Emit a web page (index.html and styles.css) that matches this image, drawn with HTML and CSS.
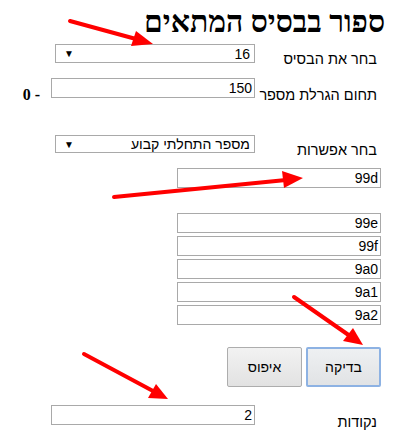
FILE: index.html
```html
<!DOCTYPE html>
<html lang="he" dir="rtl">
<head>
<meta charset="utf-8">
<link rel="stylesheet" href="styles.css">
</head>
<body>
<div class="page">
  <h1 class="title">ספור בבסיס המתאים</h1>

  <div class="row row-base">
    <div class="label">בחר את הבסיס</div>
    <div class="select sel-base"><span>16</span><span class="caret">▼</span></div>
  </div>

  <div class="row row-range">
    <div class="label">תחום הגרלת מספר</div>
    <div class="field f-range">150</div>
    <div class="zero" dir="ltr">0 -</div>
  </div>

  <div class="row row-opt">
    <div class="label">בחר אפשרות</div>
    <div class="select sel-opt"><span>מספר התחלתי קבוע</span><span class="caret">▼</span></div>
  </div>

  <div class="row row-start">
    <div class="field f-wide">99d</div>
  </div>

  <div class="list">
    <div class="field f-wide">99e</div>
    <div class="field f-wide">99f</div>
    <div class="field f-wide">9a0</div>
    <div class="field f-wide">9a1</div>
    <div class="field f-wide">9a2</div>
  </div>

  <div class="buttons">
    <div class="btn btn-focus">בדיקה</div>
    <div class="btn">איפוס</div>
  </div>

  <div class="row row-points">
    <div class="label">נקודות</div>
    <div class="field f-range">2</div>
  </div>

  <svg class="arrows" width="405" height="445" viewBox="0 0 405 445">
    <g stroke="#f00" stroke-width="4" stroke-linecap="round" fill="#f00">
      <line x1="70" y1="21" x2="136" y2="39"/>
      <polygon stroke="none" points="153,44 131,46 136,31"/>
      <line x1="114" y1="197" x2="286" y2="180"/>
      <polygon stroke="none" points="303,178 284,188 282,171"/>
      <line x1="294" y1="297" x2="350" y2="336"/>
      <polygon stroke="none" points="363,345 343,341 353,328"/>
      <line x1="84" y1="354" x2="153" y2="391"/>
      <polygon stroke="none" points="168,399 148,398 156,384"/>
    </g>
  </svg>
</div>
</body>
</html>
```
FILE: styles.css
```css
html, body {
  margin: 0;
  padding: 0;
  background: #fff;
}
.page {
  position: relative;
  width: 405px;
  height: 445px;
  direction: rtl;
  font-family: "Liberation Sans", Arial, sans-serif;
  font-size: 14px;
  color: #000;
  overflow: hidden;
}
.title {
  margin: 0;
  height: 44px;
  padding-right: 20px;
  box-sizing: border-box;
  font-family: "Liberation Serif", "Times New Roman", serif;
  font-weight: bold;
  font-size: 30px;
  line-height: 44px;
}
.row {
  display: flex;
  align-items: flex-start;
  padding-right: 28px;
  box-sizing: border-box;
}
.label {
  width: 122px;
  flex: none;
  line-height: 18px;
  font-size: 14.5px;
}
.row-base { height: 34px; }
.row-base .label { padding-top: 6px; }
.row-range { height: 57px; }
.row-range .label { padding-top: 8px; }
.row-opt { height: 33px; }
.row-opt .label { padding-top: 6px; }
.row-start { height: 45px; padding-right: 24px; }
.row-points { height: 40px; }
.row-points .label { padding-top: 8px; }

.select {
  box-sizing: border-box;
  width: 200px;
  height: 19px;
  border: 1px solid #a9a9a9;
  display: flex;
  justify-content: space-between;
  align-items: center;
  padding: 0 4px 0 8px;
  font-size: 14px;
}
.sel-opt { height: 18px; }
.caret {
  font-size: 10px;
}
.field {
  box-sizing: border-box;
  height: 20px;
  border: 1px solid #a9a9a9;
  padding: 0 2px;
  line-height: 18px;
  font-size: 14px;
  text-align: right;
}
.f-range { width: 204px; }
.f-wide { width: 204px; }
.zero {
  margin-right: 11px;
  font-family: "Liberation Serif", "Times New Roman", serif;
  font-weight: bold;
  font-size: 16px;
  line-height: 18px;
  padding-top: 8px;
}
.list {
  display: flex;
  flex-direction: column;
  gap: 3px;
  padding-right: 24px;
  height: 134px;
}
.buttons {
  display: flex;
  gap: 4px;
  padding-right: 24px;
  height: 58px;
}
.btn {
  box-sizing: border-box;
  width: 75px;
  height: 40px;
  border: 1px solid #adadad;
  border-radius: 2px;
  background: linear-gradient(#f2f2f2, #e2e2e2);
  display: flex;
  align-items: center;
  justify-content: center;
  font-size: 14px;
}
.btn-focus {
  border: 2px solid #8db2e3;
  background: linear-gradient(#eef0f2, #e1e3e5);
}
.arrows {
  position: absolute;
  left: 0;
  top: 0;
  pointer-events: none;
}
```
